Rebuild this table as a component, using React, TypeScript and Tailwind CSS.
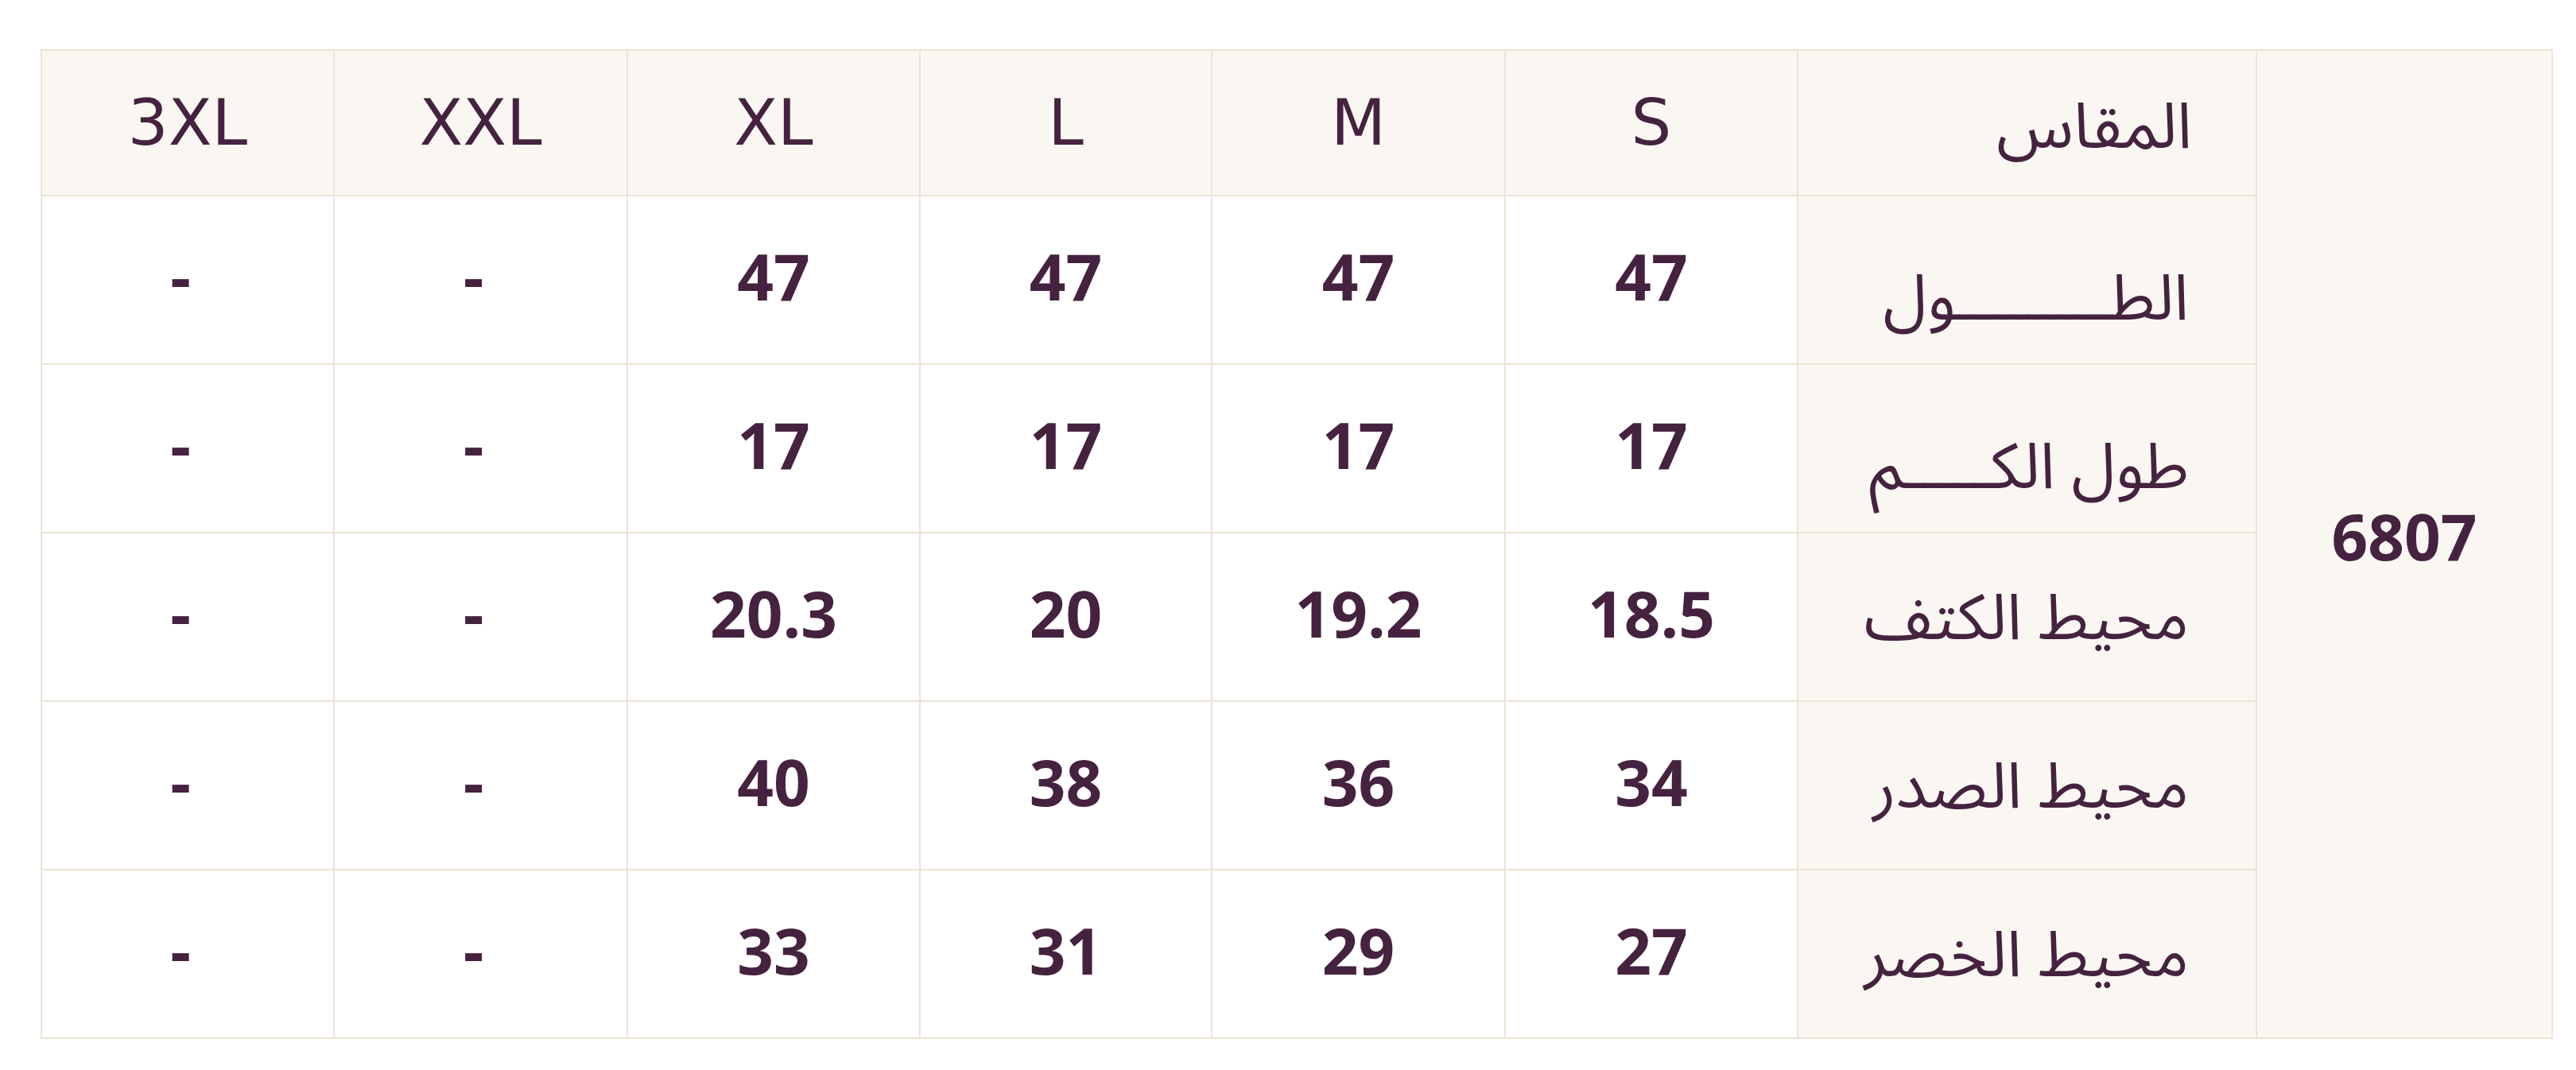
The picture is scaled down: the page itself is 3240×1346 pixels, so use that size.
import React from "react";

const sizes = ["S", "M", "L", "XL", "XXL", "3XL"];
const rows: { label: string; values: string[]; low: boolean }[] = [
  { label: "الطـــــــــول", values: ["47", "47", "47", "47", "-", "-"], low: true },
  { label: "طول الكـــــم", values: ["17", "17", "17", "17", "-", "-"], low: true },
  { label: "محيط الكتف", values: ["18.5", "19.2", "20", "20.3", "-", "-"], low: false },
  { label: "محيط الصدر", values: ["34", "36", "38", "40", "-", "-"], low: false },
  { label: "محيط الخصر", values: ["27", "29", "31", "33", "-", "-"], low: false },
];

export default function App() {
  return (
    <div
      className="min-h-[1346px] w-[3240px] bg-white pt-[62px] pl-[51px] text-[#45223f]"
      style={{ fontFamily: '"Open Sans", "Noto Sans Arabic", "Noto Sans", "DejaVu Sans", sans-serif' }}
    >
      <table dir="rtl" className="w-[3158px] table-fixed border-collapse text-[80px] leading-[1.2]">
        <colgroup>
          <col className="w-[372px]" />
          <col className="w-[577px]" />
          <col className="w-[368px]" />
          <col className="w-[369px]" />
          <col className="w-[367px]" />
          <col className="w-[368px]" />
          <col className="w-[369px]" />
          <col className="w-[368px]" />
        </colgroup>
        <tbody>
          <tr className="h-[183px]">
            <td
              rowSpan={6}
              className="border-2 border-[#ece4d4] bg-[#faf7f3] pb-[22px] text-center align-middle font-bold"
            >
              6807
            </td>
            <td className="whitespace-nowrap border-2 border-[#ece4d4] bg-[#faf7f3] pr-[80px] text-right align-middle font-normal">
              المقاس
            </td>
            {sizes.map((s) => (
              <td
                key={s}
                className="border-2 border-[#ece4d4] bg-[#faf7f3] text-center align-middle font-['DejaVu_Sans',sans-serif] font-normal"
              >
                {s}
              </td>
            ))}
          </tr>
          {rows.map((r) => (
            <tr key={r.label} className="h-[212px]">
              <td
                className={
                  r.low
                    ? "whitespace-nowrap border-2 border-[#ece4d4] bg-[#faf7f3] pr-[84px] pt-[38px] text-right align-middle"
                    : "whitespace-nowrap border-2 border-[#ece4d4] bg-[#faf7f3] pr-[84px] pb-[6px] text-right align-middle"
                }
              >
                {r.label}
              </td>
              {r.values.map((v, i) => (
                <td
                  key={i}
                  className={
                    v === "-"
                      ? "border-2 border-[#ece4d4] bg-white pr-[18px] pb-[10px] text-center align-middle font-bold"
                      : "border-2 border-[#ece4d4] bg-white pb-[10px] text-center align-middle font-bold"
                  }
                >
                  {v}
                </td>
              ))}
            </tr>
          ))}
        </tbody>
      </table>
    </div>
  );
}
